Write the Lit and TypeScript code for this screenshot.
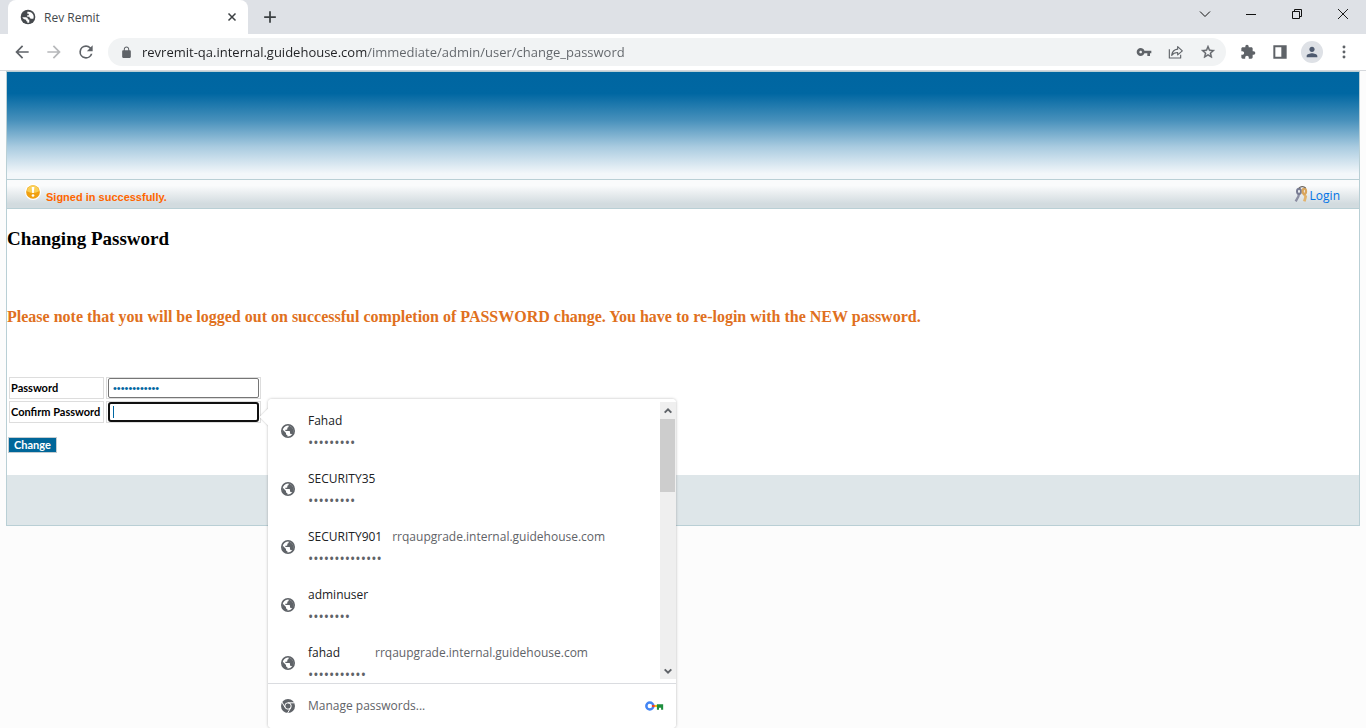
import { LitElement, html, css, svg } from "lit";
import { customElement, property, state } from "lit/decorators.js";

const GLOBE =
  "M12 2C6.48 2 2 6.48 2 12s4.48 10 10 10 10-4.48 10-10S17.52 2 12 2zm-1 17.93c-3.95-.49-7-3.85-7-7.93 0-.62.08-1.21.21-1.79L9 15v1c0 1.1.9 2 2 2v1.93zm6.9-2.54c-.26-.81-1-1.39-1.9-1.39h-1v-3c0-.55-.45-1-1-1H8v-2h2c.55 0 1-.45 1-1V7h2c1.1 0 2-.9 2-2v-.41c2.93 1.19 5 4.06 5 7.41 0 2.08-.8 3.97-2.1 5.39z";

const ICONS: Record<string, unknown> = {
  globe: svg`<circle cx="12" cy="12" r="9.300" fill="none" stroke="currentColor" stroke-width="2.400"/><path d="M3.500 9.500L9 15v1c0 1.100.9 2 2 2v3C6 21 2.500 17 3.500 9.500zM13 3.500V5c0 1.100-.9 2-2 2v2c0 .55-.45 1-1 1H8v2h6c.55 0 1 .45 1 1v3h1c.9 0 1.640.58 1.900 1.390L19 17c3-4 2-10-6-13.500z"/>`,
  tabglobe: svg`<circle cx="12" cy="12" r="11"/><path fill="#fff" d="M3.5 12.5h5.2c2.2 0 3.2 1.2 3.2 3.2h2v4.6c-1 .4-2 .5-3 .4v-2.3H9.300v-2.200c-2.500 0-5-1.200-5.800-3.700zM11 4.200c3.600-.8 7.300 1 8.800 4.300 1 2 .9 4.200.2 6.200h-2.300c-2 0-3.500-1-3.500-3h-3.400V9.300h2.400V7H11z"/>`,
  back: svg`<path d="M20 11H7.830l5.590-5.590L12 4l-8 8 8 8 1.410-1.410L7.830 13H20v-2z"/>`,
  forward: svg`<path d="M12 4l-1.410 1.410L16.170 11H4v2h12.170l-5.580 5.590L12 20l8-8z"/>`,
  reload: svg`<path d="M17.650 6.350A7.958 7.958 0 0 0 12 4a8 8 0 1 0 7.730 10h-2.080A6 6 0 1 1 12 6c1.660 0 3.140.69 4.220 1.780L13 11h7V4z"/>`,
  lock: svg`<path d="M18 8h-1V6c0-2.760-2.240-5-5-5S7 3.240 7 6v2H6c-1.100 0-2 .9-2 2v10c0 1.100.9 2 2 2h12c1.100 0 2-.9 2-2V10c0-1.100-.9-2-2-2zM8.900 8V6a3.100 3.100 0 0 1 6.200 0v2z"/>`,
  key: svg`<path d="M12.650 10C11.830 7.670 9.610 6 7 6c-3.310 0-6 2.690-6 6s2.690 6 6 6c2.610 0 4.830-1.670 5.650-4H17v4h4v-4h2v-4H12.650zM7 14c-1.100 0-2-.9-2-2s.9-2 2-2 2 .9 2 2-.9 2-2 2z"/>`,
  share: svg`<path fill="none" stroke="currentColor" stroke-width="1.700" stroke-linejoin="round" d="M2 8v13h17v-5M14.500 4l7 6.200-7 6.200v-3.700c-4 0-6.800 1-9 4.300.6-5 3.500-8.500 9-9.300z"/>`,
  star: svg`<path stroke="currentColor" stroke-width=".6" d="M22 9.240l-7.190-.62L12 2 9.190 8.630 2 9.240l5.460 4.730L5.820 21 12 17.270 18.180 21l-1.630-7.030L22 9.240zM12 15.400l-3.760 2.270 1-4.280-3.320-2.880 4.380-.38L12 6.100l1.710 4.040 4.380.38-3.320 2.880 1 4.280L12 15.400z"/>`,
  puzzle: svg`<path d="M20.500 11H19V7c0-1.100-.9-2-2-2h-4V3.500a2.500 2.500 0 0 0-5 0V5H4c-1.100 0-1.990.9-1.990 2v3.800H3.500c1.490 0 2.700 1.210 2.700 2.700s-1.210 2.700-2.700 2.700H2V20c0 1.100.9 2 2 2h3.800v-1.500c0-1.490 1.210-2.700 2.700-2.700s2.700 1.210 2.700 2.700V22H17c1.100 0 2-.9 2-2v-4h1.500a2.500 2.500 0 0 0 0-5z"/>`,
  panel: svg`<path fill-rule="evenodd" d="M2 2h20v20H2zM5 5v14h9V5z"/>`,
  person: svg`<path d="M12 12c2.210 0 4-1.790 4-4s-1.790-4-4-4-4 1.790-4 4 1.790 4 4 4zm0 2c-2.670 0-8 1.340-8 4v2h16v-2c0-2.660-5.330-4-8-4z"/>`,
  more: svg`<circle cx="12" cy="4.500" r="2.200"/><circle cx="12" cy="12" r="2.200"/><circle cx="12" cy="19.500" r="2.200"/>`,
  close: svg`<path fill="none" stroke="currentColor" stroke-width="3" d="M5 5l14 14M19 5L5 19"/>`,
  plus: svg`<path d="M10.500 2h3v8.500H22v3h-8.500V22h-3v-8.500H2v-3h8.500z"/>`,
  winmenu: svg`<path fill="none" stroke="currentColor" stroke-width="2" d="M2 7l10 10L22 7"/>`,
  winmin: svg`<path d="M2 12h20v2H2z"/>`,
  winmax: svg`<path fill="none" stroke="currentColor" stroke-width="2" d="M3 7h14v14H3zM7 7V3h14v14h-4"/>`,
  winclose: svg`<path fill="none" stroke="currentColor" stroke-width="1.900" d="M2 2l20 20M22 2L2 22"/>`,
  up: svg`<path fill="none" stroke="currentColor" stroke-width="6" d="M2 17l10-10 10 10"/>`,
  down: svg`<path fill="none" stroke="currentColor" stroke-width="6" d="M2 7l10 10L22 7"/>`,
  chrome: svg`<circle cx="12" cy="12" r="10.500"/><g fill="none" stroke="#fff" stroke-width="1.500"><circle cx="12" cy="12" r="4.800"/><path d="M12 7.200h10M7.800 14.400L2.800 6M16.200 14.400L11.200 23"/></g>`,
  colorkey: svg`<circle cx="7" cy="12" r="4.200" fill="none" stroke="#4285f4" stroke-width="3"/><path fill="#ea4335" d="M9.500 10.700H13v2.600H9.500z"/><path fill="#fbbc04" d="M13 10.700h3.500v2.600H13z"/><path fill="#1e8e3e" d="M15.500 10H23v6.500h-2.500V14H18v2.500h-2.500z"/>`,
  notice: svg`<circle cx="12" cy="12" r="12" fill="#fff"/><circle cx="12" cy="12" r="10.300" fill="#f0a010"/><path fill="#f9cf58" d="M3 11a9 9 0 0 1 18 0q-9 5-18 0z"/><path fill="#fff" d="M10 4.500h4l-.8 9h-2.400z"/><circle cx="12" cy="17.300" r="2" fill="#fff"/>`,
  keys: svg`<g fill="none"><path stroke="#8c8fa3" stroke-width="3.500" d="M9 12L8 16l-4 7"/><ellipse cx="9" cy="8" rx="3" ry="4" stroke="#777b92" stroke-width="3"/><path stroke="#e2b36c" stroke-width="4" d="M16 11l3 5-2 7"/><ellipse cx="17" cy="8" rx="2.500" ry="4" stroke="#d9a55c" stroke-width="3.500"/><path stroke="#6f6a66" stroke-width="2" d="M9 3q5-4 10 0"/></g>`,
};

@customElement("ui-icon")
class UiIcon extends LitElement {
  @property() name = "";
  static styles = css`
    :host { display: inline-flex; flex: none; width: 16px; height: 16px; }
    svg { width: 100%; height: 100%; fill: currentColor; }
  `;
  render() {
    return html`<svg viewBox="0 0 24 24" aria-hidden="true">${ICONS[this.name]}</svg>`;
  }
}

@customElement("browser-chrome")
class BrowserChrome extends LitElement {
  static styles = css`
    :host { display: block; font-family: "Open Sans", "Segoe UI", sans-serif; color: #5f6368; }
    button { border: 0; padding: 0; background: none; color: inherit; display: inline-flex; align-items: center; justify-content: center; }
    .strip { display: flex; height: 34px; background: #dee1e6; padding-left: 8px; }
    .tab { display: flex; align-items: center; width: 240px; box-sizing: border-box; padding: 0 8px 0 12px; background: #fff; border-radius: 8px 8px 0 0; font-size: 12px; color: #45494d; }
    .title { flex: 1; margin-left: 8px; }
    .tabclose { width: 16px; height: 16px; color: #3c4043; }
    .tabclose ui-icon { width: 12px; height: 12px; }
    .new { width: 44px; color: #3c4043; }
    .new ui-icon { width: 14px; height: 14px; }
    .wins { display: flex; margin-left: auto; color: #111; height: 28px; }
    .wins button { width: 46px; }
    .wins ui-icon { width: 12px; height: 12px; }
    .bar { display: flex; align-items: center; height: 36px; background: #fff; border-bottom: 1px solid #d5d8dc; padding: 0 6px; }
    .nav { display: flex; }
    .nav button { width: 32px; height: 32px; }
    .nav ui-icon { width: 20px; height: 20px; }
    .off { opacity: 0.45; }
    .omni { flex: 1; display: flex; align-items: center; height: 28px; margin: 0 6px; background: #f1f3f4; border-radius: 14px; padding: 0 2px 0 10px; }
    .lock { width: 16px; height: 16px; }
    .lock ui-icon { width: 13px; height: 13px; }
    .url { flex: 1; min-width: 0; border: 0; outline: 0; padding: 0; margin-left: 8px; font: 13px/20px "Open Sans", sans-serif; color: #202124; -webkit-text-fill-color: transparent; background: linear-gradient(90deg, #202124 225px, #5f6368 225px); -webkit-background-clip: text; background-clip: text; }
    .omni button:not(.lock) { width: 32px; height: 28px; }
    .tools { display: flex; }
    .tools button { width: 32px; height: 32px; }
    .avatar span { display: flex; align-items: center; justify-content: center; width: 22px; height: 22px; border-radius: 50%; background: #dee1e6; color: #4f5b70; }
  `;
  render() {
    return html`
      <div class="strip">
        <div class="tab">
          <ui-icon name="tabglobe"></ui-icon><span class="title">Rev Remit</span>
          <button class="tabclose" aria-label="Close tab"><ui-icon name="close"></ui-icon></button>
        </div>
        <button class="new" aria-label="New tab"><ui-icon name="plus"></ui-icon></button>
        <div class="wins">
          <button aria-label="Search tabs"><ui-icon name="winmenu"></ui-icon></button>
          <button aria-label="Minimize"><ui-icon name="winmin"></ui-icon></button>
          <button aria-label="Restore"><ui-icon name="winmax"></ui-icon></button>
          <button aria-label="Close"><ui-icon name="winclose"></ui-icon></button>
        </div>
      </div>
      <div class="bar">
        <div class="nav">
          <button aria-label="Back"><ui-icon name="back"></ui-icon></button>
          <button class="off" aria-label="Forward"><ui-icon name="forward"></ui-icon></button>
          <button aria-label="Reload"><ui-icon name="reload"></ui-icon></button>
        </div>
        <div class="omni">
          <button class="lock" aria-label="Site information"><ui-icon name="lock"></ui-icon></button>
          <input class="url" aria-label="Address" spellcheck="false" value="revremit-qa.internal.guidehouse.com/immediate/admin/user/change_password" />
          <button aria-label="Passwords"><ui-icon name="key"></ui-icon></button>
          <button aria-label="Share"><ui-icon name="share"></ui-icon></button>
          <button aria-label="Bookmark"><ui-icon name="star"></ui-icon></button>
        </div>
        <div class="tools">
          <button aria-label="Extensions"><ui-icon name="puzzle"></ui-icon></button>
          <button aria-label="Side panel"><ui-icon name="panel"></ui-icon></button>
          <button class="avatar" aria-label="Profile"><span><ui-icon name="person"></ui-icon></span></button>
          <button aria-label="Menu"><ui-icon name="more"></ui-icon></button>
        </div>
      </div>
    `;
  }
}

interface Credential { user: string; site?: string; length: number; }

@customElement("password-menu")
class PasswordMenu extends LitElement {
  @state() entries: Credential[] = [
    { user: "Fahad", length: 9 },
    { user: "SECURITY35", length: 9 },
    { user: "SECURITY901", site: "rrqaupgrade.internal.guidehouse.com", length: 14 },
    { user: "adminuser", length: 8 },
    { user: "fahad", site: "rrqaupgrade.internal.guidehouse.com", length: 11 },
  ];
  static styles = css`
    :host { display: block; width: 408px; background: #fff; border-radius: 4px; box-shadow: 0 0 3px rgba(0, 0, 0, 0.28); font: 12px/20px "Open Sans", "Segoe UI", sans-serif; color: #202124; }
    .notch { position: absolute; left: -6px; top: 12px; width: 12px; height: 12px; background: #fff; transform: rotate(45deg); box-shadow: 0 0 2px rgba(0, 0, 0, 0.25); }
    .body { position: relative; background: #fff; border-radius: 4px; }
    .scroll { display: flex; height: 281px; padding-top: 3px; }
    .list { flex: 1; margin: 0; padding: 0; list-style: none; overflow: hidden; }
    .row { display: flex; width: 100%; height: 58px; align-items: center; border: 0; background: none; padding: 0 12px; text-align: left; font: inherit; color: inherit; gap: 12px; }
    ui-icon { color: #5f6368; }
    .text { display: grid; gap: 6px; align-self: flex-start; padding-top: 9px; }
    .who { display: flex; gap: 10px; }
    .name { min-width: 57px; }
    .site, .dots { color: #5f6368; }
    .dots { font-size: 14px; line-height: 12px; }
    .track { display: flex; flex-direction: column; width: 16px; margin-bottom: 4px; background: #efefef; }
    .track button { display: flex; align-items: center; justify-content: center; height: 17px; border: 0; padding: 0; background: none; }
    .track ui-icon { width: 8px; height: 8px; }
    .thumb { height: 73px; background: #cdcdcd; margin-right: 1px; margin-bottom: auto; }
    .manage { display: flex; align-items: center; gap: 12px; box-sizing: border-box; width: 100%; height: 45px; border: 0; border-top: 1px solid #dadce0; background: none; padding: 0 12px; font: inherit; color: #5f6368; }
    .manage .label { flex: 1; text-align: left; }
    .manage .color { width: 20px; height: 20px; }
  `;
  render() {
    return html`
      <span class="notch"></span>
      <div class="body">
        <div class="scroll">
          <ul class="list">
            ${this.entries.map((e) => html`<li><button class="row">
              <ui-icon name="globe"></ui-icon>
              <span class="text">
                <span class="who"><span class="name">${e.user}</span>${e.site ? html`<span class="site">${e.site}</span>` : ""}</span>
                <span class="dots">${"•".repeat(e.length)}</span>
              </span></button></li>`)}
          </ul>
          <div class="track">
            <button aria-label="Scroll up"><ui-icon name="up"></ui-icon></button>
            <div class="thumb"></div>
            <button aria-label="Scroll down"><ui-icon name="down"></ui-icon></button>
          </div>
        </div>
        <button class="manage"><ui-icon name="chrome"></ui-icon><span class="label">Manage passwords...</span><ui-icon class="color" name="colorkey"></ui-icon></button>
      </div>
    `;
  }
}

@customElement("app-root")
class AppRoot extends LitElement {
  static styles = css`
    :host { display: flex; flex-direction: column; height: 100vh; overflow: hidden; background: #fcfcfc; font-family: "Liberation Serif", "Times New Roman", serif; color: #000; }
    .page { margin: 0 6px; border: 1px solid #b9cfd5; background: #fff; }
    .banner { height: 107px; background: linear-gradient(#0066a1 0%, #0067a2 20%, #4790bb 45%, #a9cbe0 70%, #f3f7fa 95%); border-bottom: 1px solid #b9cfd5; }
    .status { display: flex; justify-content: space-between; align-items: center; height: 28px; padding: 0 19px 0 18px; border-bottom: 1px solid #b9cfd5; background: linear-gradient(#fafbfc 20%, #d2dbdf 85%); }
    .flash { display: flex; align-items: center; gap: 5px; font: bold 11px/16px "Liberation Sans", Arial, sans-serif; color: #ff6600; }
    .flash span { padding-top: 6px; }
    .flash ui-icon { margin-bottom: 4px; }
    .login { display: flex; align-items: center; gap: 1px; font: 12px/16px "Open Sans", sans-serif; color: #0073e6; text-decoration: none; }
    .login span { padding-top: 4px; }
    h3 { margin: 20px 0 0; font-size: 19px; line-height: 20px; }
    .note { margin: 56px 0 0; font-size: 16px; line-height: 24px; font-weight: bold; color: #e07020; }
    form { margin: 46px 0 0; padding-bottom: 22px; }
    table { border-spacing: 2px; }
    td, th { border: 1px solid #ddd; padding: 0 1px; height: 20px; box-sizing: content-box; text-align: left; }
    th { min-width: 91px; font: 700 11px/16px Lato, "Trebuchet MS", sans-serif; white-space: nowrap; }
    .anchor { position: relative; }
    .field { display: block; box-sizing: border-box; width: 151px; height: 20px; border: 1px solid #767676; border-radius: 2px; padding: 0 4px; font: 11px "Liberation Sans", sans-serif; color: #0066a1; outline: 0; }
    .active { border: 2px solid #101010; border-radius: 3px; padding: 0 3px; background: linear-gradient(#0066a1, #0066a1) 3px 2px / 1px 12px no-repeat #fff; }
    password-menu { position: absolute; left: 161px; top: -3px; z-index: 2; }
    .submit { display: block; margin: 12px 0 0 1px; border: 1px solid #c4ccd0; background: #006699; color: #fff; font: 700 11px/14px Lato, "Trebuchet MS", sans-serif; padding: 0 5px; }
    .foot { height: 50px; background: #dee6e9; }
  `;
  render() {
    return html`
      <browser-chrome></browser-chrome>
      <main class="page">
        <div class="banner"></div>
        <div class="status">
          <div class="flash"><ui-icon name="notice"></ui-icon><span>Signed in successfully.</span></div>
          <a class="login" href="#login"><ui-icon name="keys"></ui-icon><span>Login</span></a>
        </div>
        <h3>Changing Password</h3>
        <p class="note">Please note that you will be logged out on successful completion of PASSWORD change. You have to re-login with the NEW password.</p>
        <form @submit=${(e: Event) => e.preventDefault()}>
          <table>
            <tr><th><label for="password">Password</label></th><td><input class="field" id="password" type="password" value="abcdefghijkl" /></td></tr>
            <tr><th><label for="confirm">Confirm Password</label></th><td class="anchor"><input class="field active" id="confirm" type="password" /><password-menu></password-menu></td></tr>
          </table>
          <button class="submit">Change</button>
        </form>
        <div class="foot"></div>
      </main>
    `;
  }
}
